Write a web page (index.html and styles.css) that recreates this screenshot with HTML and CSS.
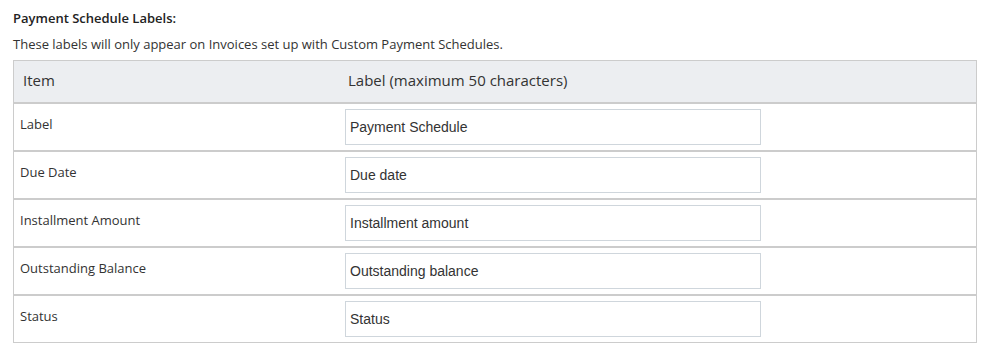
FILE: index.html
```html
<!DOCTYPE html>
<html lang="en">
<head>
    <meta charset="UTF-8">
    <title>Payment Schedule Labels</title>
    <link rel="stylesheet" href="styles.css">
</head>
<body>
    <div class="section">
        <h4 class="section-title">Payment Schedule Labels:</h4>
        <p class="section-note">These labels will only appear on Invoices set up with Custom Payment Schedules.</p>

        <table class="labels-table">
            <thead>
                <tr>
                    <th class="col-item">Item</th>
                    <th class="col-label">Label (maximum 50 characters)</th>
                </tr>
            </thead>
            <tbody>
                <tr>
                    <td class="col-item">Label</td>
                    <td class="col-label"><input type="text" maxlength="50" value="Payment Schedule"></td>
                </tr>
                <tr>
                    <td class="col-item">Due Date</td>
                    <td class="col-label"><input type="text" maxlength="50" value="Due date"></td>
                </tr>
                <tr>
                    <td class="col-item">Installment Amount</td>
                    <td class="col-label"><input type="text" maxlength="50" value="Installment amount"></td>
                </tr>
                <tr>
                    <td class="col-item">Outstanding Balance</td>
                    <td class="col-label"><input type="text" maxlength="50" value="Outstanding balance"></td>
                </tr>
                <tr>
                    <td class="col-item">Status</td>
                    <td class="col-label"><input type="text" maxlength="50" value="Status"></td>
                </tr>
            </tbody>
        </table>
    </div>
</body>
</html>
```

FILE: styles.css
```css
body {
    margin: 0;
    background-color: #fff;
    font-family: "Open Sans", "Noto Sans", sans-serif;
    color: #333;
}
.section {
    padding: 9px 13px 0 13px;
    width: 964px;
}
.section-title {
    margin: 0;
    font-size: 13px;
    font-weight: 600;
    line-height: 18px;
    color: #222;
}
.section-note {
    margin: 8px 0 0 0;
    font-size: 13px;
    line-height: 18px;
    color: #333;
}
.labels-table {
    margin-top: 7px;
    width: 100%;
    border-collapse: collapse;
    border: 1px solid #ccc;
}
.labels-table th {
    height: 38px;
    padding: 0 0 3px 0;
    background-color: #eceef1;
    border-bottom: 2px solid #ccc;
    font-size: 15px;
    font-weight: normal;
    text-align: left;
    vertical-align: middle;
}
.labels-table th.col-item {
    width: 322px;
    padding-left: 9px;
}
.labels-table th.col-label {
    padding-left: 3px;
}
.labels-table td {
    padding: 0;
    border-bottom: 2px solid #ccc;
    font-size: 13px;
}
.labels-table tbody tr:last-child td {
    border-bottom-width: 1px;
}
.labels-table td.col-item {
    padding: 11px 0 0 6px;
    line-height: 18px;
    vertical-align: top;
}
.labels-table td.col-label {
    height: 46px;
    vertical-align: middle;
}
.labels-table input {
    display: block;
    width: 416px;
    height: 36px;
    margin: 0;
    padding: 0 4px;
    box-sizing: border-box;
    border: 1px solid #cfd6dc;
    border-radius: 0;
    font-family: "Liberation Sans", Arial, sans-serif;
    font-size: 14px;
    color: #333;
    background-color: #fff;
}
```
